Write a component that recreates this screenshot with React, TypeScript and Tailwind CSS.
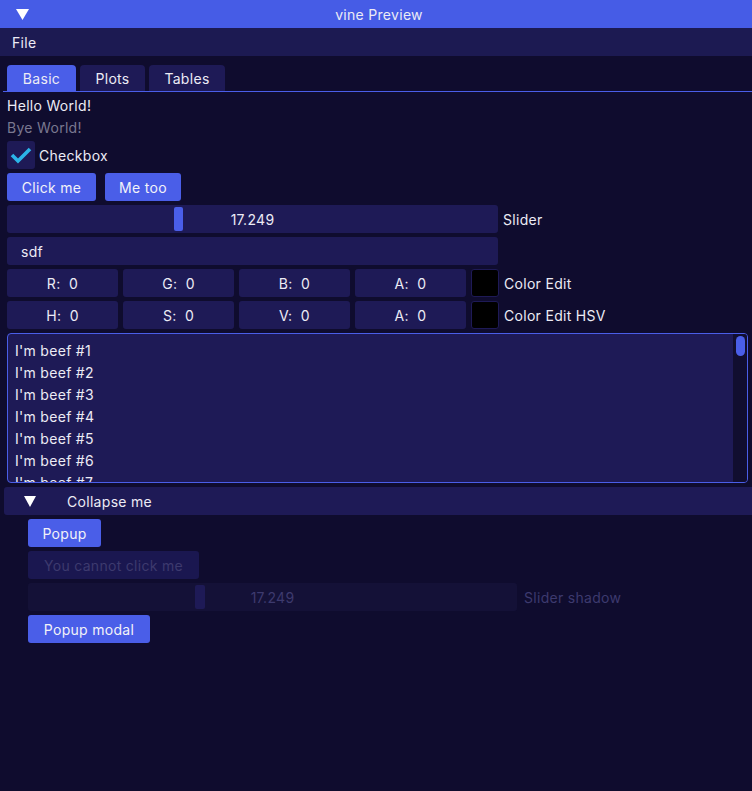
const font = { fontFamily: "Inter, 'Noto Sans', sans-serif" };

const Frame = ({ className = "", children }: { className?: string; children?: React.ReactNode }) => (
  <div className={`h-[28px] rounded-[3px] bg-[#1e1a56] flex items-center ${className}`}>{children}</div>
);

const Btn = ({ label, className = "" }: { label: string; className?: string }) => (
  <button className={`h-[28px] rounded-[3px] bg-[#4a5ee8] text-[#f2f2f8] text-[14px] ${className}`}>{label}</button>
);

const ColorRow = ({ labels, name }: { labels: string[]; name: string }) => (
  <div className="flex items-center gap-[5px]">
    {labels.map((l) => (
      <Frame key={l} className="w-[111px] justify-center">
        <span>{l}:&nbsp; 0</span>
      </Frame>
    ))}
    <div className="w-[28px] h-[28px] rounded-[3px] bg-black border border-[#1e1a56]" />
    <span>{name}</span>
  </div>
);

export default function App() {
  const beef = [1, 2, 3, 4, 5, 6, 7];
  return (
    <div className="w-[752px] h-[791px] bg-[#0f0c2e] text-[#ecebf5] text-[14px] tracking-[0.3px] overflow-hidden" style={font}>
      <div className="h-[28px] bg-[#465ce6] flex items-center relative">
        <svg className="ml-[16px]" width="13" height="11" viewBox="0 0 13 11">
          <path d="M0 0 H13 L6.5 11 Z" fill="#fff" />
        </svg>
        <span className="absolute left-0 right-0 text-center text-[14px] pl-[6px]">vine Preview</span>
      </div>
      <div className="h-[28px] bg-[#1c1a52] flex items-center pl-[12px]">File</div>

      <div className="pt-[9px] pl-[3px]">
        <div className="flex gap-[4px] pl-[4px] h-[26px]">
          <div className="w-[69px] rounded-t-[4px] bg-[#4a5ee8] flex items-center justify-center pt-[1px]">Basic</div>
          <div className="w-[65px] rounded-t-[4px] bg-[#1e1a56] flex items-center justify-center pt-[1px]">Plots</div>
          <div className="w-[76px] rounded-t-[4px] bg-[#1e1a56] flex items-center justify-center pt-[1px]">Tables</div>
        </div>
        <div className="h-[1px] bg-[#4a5ee8]" />
      </div>

      <div className="px-[7px] pt-[5px] flex flex-col gap-[4px]">
        <div className="h-[18px] leading-[18px]">Hello World!</div>
        <div className="h-[18px] leading-[18px] text-[#7a7890]">Bye World!</div>
        <div className="flex items-center gap-[4px]">
          <div className="w-[28px] h-[28px] rounded-[3px] bg-[#1e1a56] flex items-center justify-center">
            <svg width="22" height="18" viewBox="0 0 22 18">
              <path d="M2 9 L8 15 L20 3" stroke="#2bb4e8" strokeWidth="3.6" fill="none" />
            </svg>
          </div>
          <span>Checkbox</span>
        </div>
        <div className="flex gap-[9px]">
          <Btn label="Click me" className="w-[89px]" />
          <Btn label="Me too" className="w-[76px]" />
        </div>
        <div className="flex items-center gap-[5px]">
          <Frame className="w-[491px] relative justify-center">
            <div className="absolute left-[167px] top-[2px] w-[9px] h-[24px] rounded-[2px] bg-[#4a5ee8]" />
            <span className="relative">17.249</span>
          </Frame>
          <span>Slider</span>
        </div>
        <Frame className="w-[491px] pl-[14px]">sdf</Frame>
        <ColorRow labels={["R", "G", "B", "A"]} name="Color Edit" />
        <ColorRow labels={["H", "S", "V", "A"]} name="Color Edit HSV" />
        <div className="h-[150px] w-[741px] rounded-[4px] border border-[#4a5ee8] bg-[#1e1a56] flex overflow-hidden">
          <div className="flex-1 pl-[7px] pt-[7px] flex flex-col overflow-hidden">
            {beef.map((n) => (
              <div key={n} className="h-[22px] leading-[20px] shrink-0">I'm beef #{n}</div>
            ))}
          </div>
          <div className="w-[14px] bg-[#110e30] pt-[2px] flex justify-center">
            <div className="w-[9px] h-[20px] rounded-full bg-[#4a5ee8]" />
          </div>
        </div>
      </div>

      <div className="pt-[4px] pl-[4px] flex flex-col gap-[4px]">
        <div className="h-[28px] rounded-l-[3px] bg-[#1e1a56] flex items-center">
          <svg className="ml-[20px]" width="12" height="11" viewBox="0 0 12 11">
            <path d="M0 0 H12 L6 11 Z" fill="#fff" />
          </svg>
          <span className="ml-[31px]">Collapse me</span>
        </div>
        <div className="pl-[24px] flex flex-col gap-[4px]">
          <Btn label="Popup" className="w-[73px]" />
          <div className="w-[171px] h-[28px] rounded-[3px] bg-[#1a1750] text-[#3d3a6e] flex items-center justify-center">You cannot click me</div>
          <div className="flex items-center gap-[7px]">
            <div className="w-[489px] h-[28px] rounded-[3px] bg-[#141137] relative flex items-center justify-center text-[#3d3a6e]">
              <div className="absolute left-[167px] top-[2px] w-[10px] h-[24px] rounded-[2px] bg-[#1e1a56]" />
              <span className="relative">17.249</span>
            </div>
            <span className="text-[#3d3a6e]">Slider shadow</span>
          </div>
          <Btn label="Popup modal" className="w-[122px]" />
        </div>
      </div>
    </div>
  );
}
